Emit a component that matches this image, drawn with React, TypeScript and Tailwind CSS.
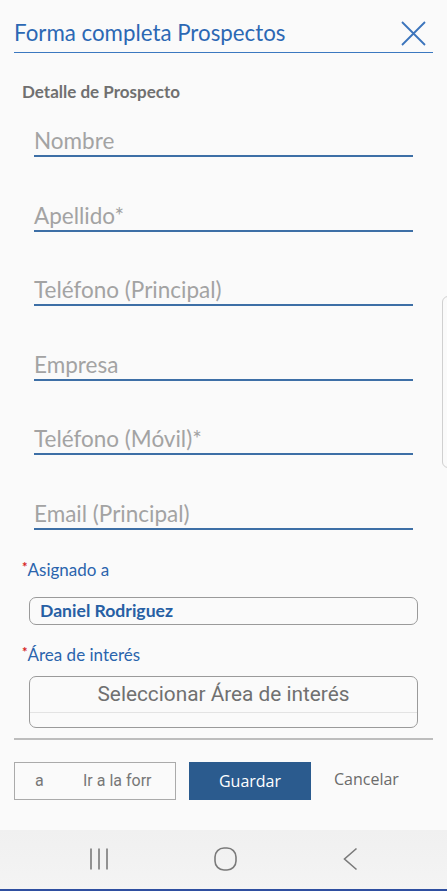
import React from "react";

const fields = [
  "Nombre",
  "Apellido*",
  "Teléfono (Principal)",
  "Empresa",
  "Teléfono (Móvil)*",
  "Email (Principal)",
];

function Field({ label, first }: { label: string; first: boolean }) {
  return (
    <div className={`flex items-end ${first ? "h-[55px]" : "h-[74.6px]"}`}>
      <div className="w-full border-b-2 border-[#3d6fa6] pb-[1px] text-[22.5px] leading-[26px] text-[#a3a3a3]">
        {label}
      </div>
    </div>
  );
}

function Label({ text }: { text: string }) {
  return (
    <div className="flex items-start text-[17px] leading-[20px] text-[#2a64ad]">
      <span className="mt-[-3px] text-[13px] font-bold text-[#d62020]">*</span>
      <span>{text}</span>
    </div>
  );
}

export default function App() {
  return (
    <div className="relative flex h-[891px] w-[447px] flex-col overflow-hidden bg-[#fafafa] font-['Lato','Noto_Sans',sans-serif]">
      <header className="mx-[14px] flex h-[53px] items-center justify-between border-b-[1.5px] border-[#3b78c0] pt-[14px]">
        <h1 className="text-[22.3px] leading-[26px] text-[#2c68b4]">Forma completa Prospectos</h1>
        <svg width="25" height="25" viewBox="0 0 25 25" className="mr-[7px]">
          <path d="M1 1 L24 24 M24 1 L1 24" stroke="#3b74bc" strokeWidth="1.8" fill="none" />
        </svg>
      </header>

      <p className="ml-[22px] mt-[29px] text-[17px] font-bold leading-[20px] text-[#707070]">
        Detalle de Prospecto
      </p>

      <div className="ml-[34px] mr-[34px] flex flex-col">
        {fields.map((f, i) => (
          <Field key={f} label={f} first={i === 0} />
        ))}
      </div>

      <div className="ml-[22px] mt-[30px]">
        <Label text="Asignado a" />
      </div>
      <div className="ml-[29px] mr-[29px] mt-[17px] flex h-[28px] items-center rounded-[7px] border border-[#9a9a9a] pl-[10px] text-[17.6px] font-bold text-[#275fa4]">
        Daniel Rodriguez
      </div>

      <div className="ml-[22px] mt-[20px]">
        <Label text="Área de interés" />
      </div>
      <div className="ml-[29px] mr-[29px] mt-[11px] flex h-[52px] flex-col overflow-hidden rounded-[7px] border border-[#9a9a9a]">
        <div className="flex h-[35px] items-center justify-center font-['Roboto',sans-serif] text-[20.8px] text-[#707070]">
          Seleccionar Área de interés
        </div>
        <div className="h-px bg-[#e3e3e3]" />
      </div>

      <div className="mx-[14px] mt-[10px] h-[2px] bg-[#bdbdbd]" />

      <div className="ml-[14px] mt-[22px] flex h-[38px] items-center font-['Roboto',sans-serif] text-[16px]">
        <div className="flex h-[38px] w-[162px] items-center overflow-hidden whitespace-nowrap border border-[#aaaaaa] text-[#777777]">
          <span className="ml-[20px] w-[48px] shrink-0">a</span>
          <span className="w-[72px] shrink-0 overflow-hidden">Ir a la forr</span>
        </div>
        <button className="ml-[13px] h-[38px] w-[122px] bg-[#2b5b8e] font-['Open_Sans',sans-serif] text-[16px] text-white">
          Guardar
        </button>
        <span className="ml-[23px] mt-[-4px] font-['Open_Sans',sans-serif] text-[16px] text-[#6b6b6b]">Cancelar</span>
      </div>

      <nav className="mt-auto flex h-[61px] items-center justify-center gap-[106px] border-b-2 border-[#2f4fa0] bg-gradient-to-b from-[#f0f0f0] to-[#f4f4f4] pb-[2px]">
        <svg width="18" height="24" viewBox="0 0 18 24">
          <path d="M1 1.5 V22.5 M9 1.5 V22.5 M17 1.5 V22.5" stroke="#7a7a7a" strokeWidth="1.6" fill="none" />
        </svg>
        <svg width="23" height="24" viewBox="0 0 23 24">
          <rect x="1" y="1" width="21" height="22" rx="9" stroke="#7a7a7a" strokeWidth="1.6" fill="none" />
        </svg>
        <svg width="15" height="24" viewBox="0 0 15 24">
          <path d="M13.5 1.5 L1.5 12 L13.5 22.5" stroke="#7a7a7a" strokeWidth="1.6" fill="none" />
        </svg>
      </nav>

      <div className="absolute left-[442px] top-[296px] h-[172px] w-[20px] rounded-[6px] border border-[#d0d0d0]" />
    </div>
  );
}
